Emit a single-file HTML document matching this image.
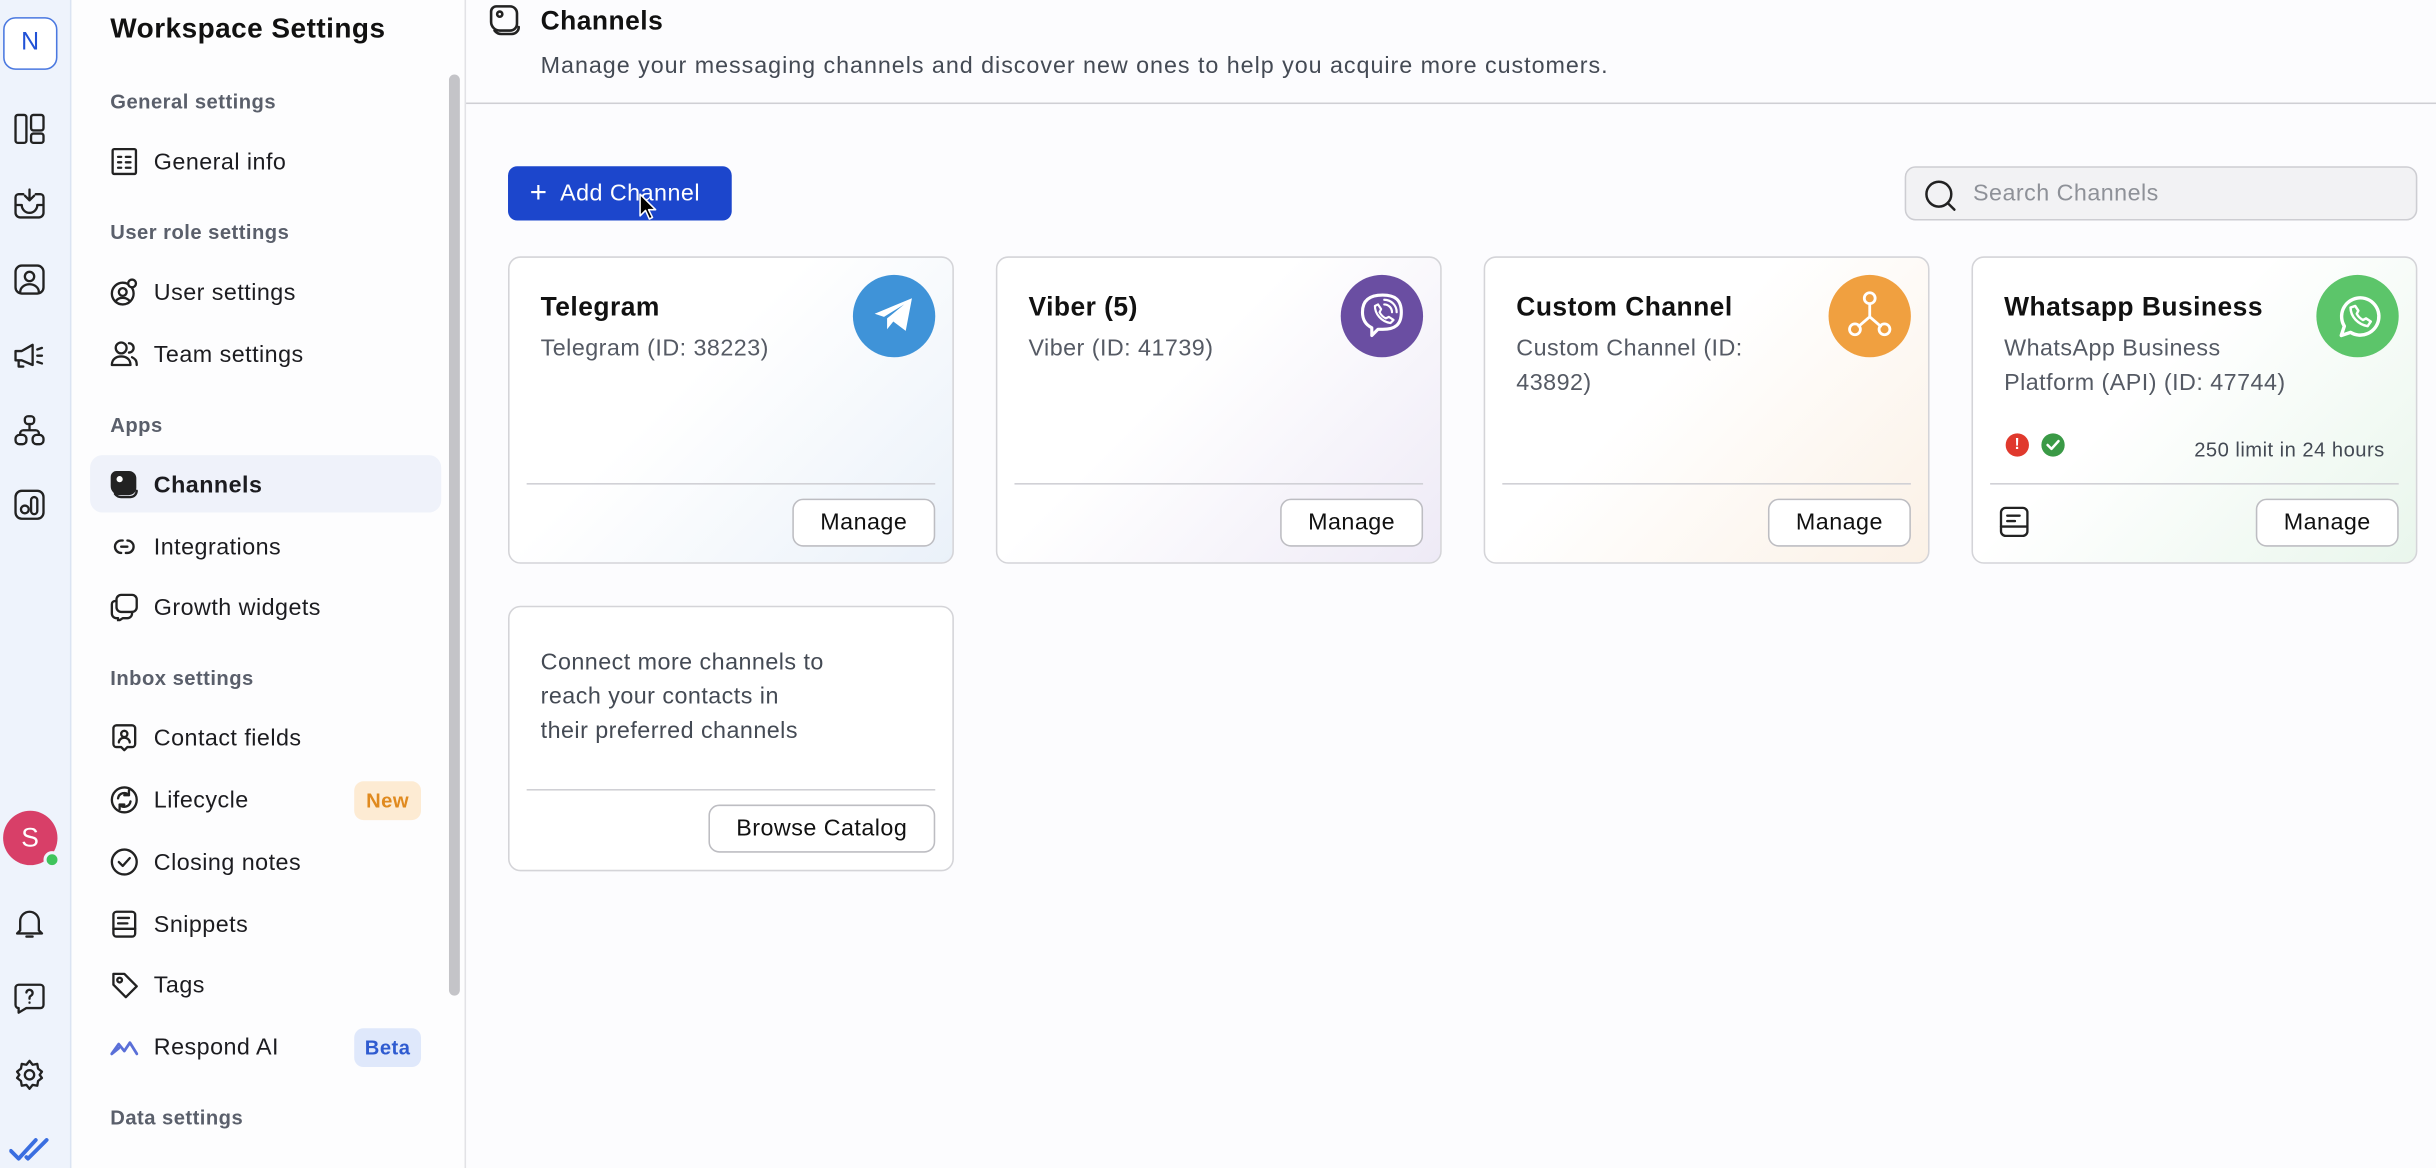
<!DOCTYPE html>
<html><head><meta charset="utf-8"><style>
*{box-sizing:border-box;margin:0;padding:0}
html,body{width:2436px;height:1168px;overflow:hidden;background:#fff;font-family:"Liberation Sans",sans-serif}
#w{position:absolute;left:0;top:0;width:1568px;height:752px;transform:scale(1.55357,1.5532);transform-origin:0 0;background:#fcfcfe;letter-spacing:0.3px}
.a{position:absolute}
.rail{left:0;top:0;width:46px;height:752px;background:#eef3fc;border-right:1px solid #dbe4f3}
.side{left:46px;top:0;width:254px;height:752px;background:#fdfdfe;border-right:1px solid #e2e2e6}
.sec{position:absolute;left:71px;font-size:13px;font-weight:bold;color:#5a5f6b}
.it{position:absolute;left:99px;font-size:15px;color:#1c1c20;margin-top:1px}
.ic{position:absolute;left:71px;width:18px;height:18px}
svg{fill:none;stroke:#222;stroke-width:1.5;stroke-linecap:round;stroke-linejoin:round}
.card{position:absolute;width:287px;height:198px;border:1px solid #d4d4d8;border-radius:8px;background:#fff;overflow:hidden}
.card h3{position:absolute;left:20px;top:22px;font-size:17px;color:#111}
.card p{position:absolute;left:20px;top:48px;font-size:15px;line-height:22px;color:#555a64;width:180px}
.card .hr{position:absolute;left:11px;right:11px;top:145px;border-top:1px solid #cfcfd4}
.btn{position:absolute;right:11px;top:155px;height:31px;border:1px solid #bdbdc2;border-radius:7px;background:#fff;font-size:15px;color:#111;padding:0 17px;line-height:29px}
.logo{position:absolute;right:11px;top:11px;width:53px;height:53px;border-radius:50%}
</style></head><body><div id="w">
<div class="a rail"></div>
<div class="a" style="left:2px;top:11px;width:35px;height:34px;border:1.5px solid #4a78e0;border-radius:8px;background:#fff;color:#2152d6;font-size:16px;text-align:center;line-height:31px">N</div>
<svg class="a" style="left:9px;top:73px" width="20" height="20" viewBox="0 0 20 20"><rect x="1" y="1" width="7" height="18" rx="1.5"/><rect x="11" y="1" width="8" height="10" rx="1.5"/><rect x="11" y="13" width="8" height="6" rx="1.5"/></svg>
<svg class="a" style="left:9px;top:121px" width="20" height="20" viewBox="0 0 20 20"><path d="M6 4H3a2 2 0 0 0-2 2v10a3 3 0 0 0 3 3h12a3 3 0 0 0 3-3V6a2 2 0 0 0-2-2h-3M1 11h4a5 5 0 0 0 10 0h4M10 1v7M7 5l3 3 3-3"/></svg>
<svg class="a" style="left:9px;top:170px" width="20" height="20" viewBox="0 0 20 20"><rect x="1" y="1" width="18" height="18" rx="4"/><circle cx="10" cy="8" r="3"/><path d="M4 18a6 5 0 0 1 12 0"/></svg>
<svg class="a" style="left:9px;top:219px" width="20" height="20" viewBox="0 0 20 20"><path d="M1 7h4l7-4v13l-7-3H1zM3 13v4h3M15 6l3-1M15 10h3M15 14l3 1"/></svg>
<svg class="a" style="left:9px;top:267px" width="20" height="20" viewBox="0 0 20 20"><rect x="7" y="1" width="6" height="5" rx="2"/><rect x="1" y="13" width="7" height="6" rx="2.5"/><rect x="12" y="13" width="7" height="6" rx="2.5"/><path d="M10 6v4M4 13v-1a2 2 0 0 1 2-2h8a2 2 0 0 1 2 2v1"/></svg>
<svg class="a" style="left:9px;top:315px" width="20" height="20" viewBox="0 0 20 20"><rect x="1" y="1" width="18" height="18" rx="4"/><circle cx="7" cy="13" r="2.5"/><rect x="11" y="5" width="4" height="11" rx="2"/></svg>
<div class="a" style="left:2px;top:522px;width:35px;height:35px;border-radius:50%;background:#d83f68;color:#fff;font-size:17px;text-align:center;line-height:35px">S</div>
<div class="a" style="left:28px;top:548px;width:11px;height:11px;border-radius:50%;background:#3ec45c;border:2px solid #eef3fc"></div>
<svg class="a" style="left:10px;top:585px" width="18" height="20" viewBox="0 0 18 20"><path d="M3 14V8a6 6 0 0 1 12 0v6l2 2H1zM7 18h4"/></svg>
<svg class="a" style="left:9px;top:633px" width="20" height="20" viewBox="0 0 20 20"><path d="M3 1h14a2 2 0 0 1 2 2v11a2 2 0 0 1-2 2H8l-5 3v-3a2 2 0 0 1-2-2V3a2 2 0 0 1 2-2zM8 6a2 2 0 1 1 3 2c-1 .6-1 1-1 2M10 12.5v.1"/></svg>
<svg class="a" style="left:9px;top:682px" width="20" height="20" viewBox="0 0 20 20"><circle cx="10" cy="10" r="3"/><path d="M10 1l2 2.5 3-.5.5 3 2.5 2-1.5 2 1.5 2-2.5 2-.5 3-3-.5-2 2.5-2-2.5-3 .5-.5-3L2 12l1.5-2L2 8l2.5-2L5 3l3 .5z"/></svg>
<svg class="a" style="left:6px;top:732px" width="28" height="16" viewBox="0 0 28 16"><path style="stroke:#3a6ee0;stroke-width:2.5" d="M1 9l5 5L17 2M11 13l1 1L24 2"/></svg>

<div class="a side"></div>
<div class="a" style="left:71px;top:8px;font-size:18px;font-weight:bold;color:#111">Workspace Settings</div>
<div class="a" style="left:289px;top:48px;width:7px;height:593px;border-radius:4px;background:#c4c4c8"></div>
<div class="sec" style="top:58px">General settings</div>
<div class="sec" style="top:142px">User role settings</div>
<div class="sec" style="top:266px">Apps</div>
<div class="sec" style="top:429px">Inbox settings</div>
<div class="sec" style="top:712px">Data settings</div>
<div class="a" style="left:58px;top:293px;width:226px;height:37px;border-radius:8px;background:#eff2fa"></div>
<svg class="ic" style="top:95px" viewBox="0 0 18 18"><rect x="1.5" y="1" width="15" height="16" rx="1"/><path d="M5 6h2M10 6h3M5 9.5h2M10 9.5h3M5 13h2M10 13h3"/></svg>
<div class="it" style="top:95px">General info</div>
<svg class="ic" style="top:179px" viewBox="0 0 18 18"><circle cx="8" cy="10" r="7"/><circle cx="8" cy="9" r="2.5"/><path d="M3.5 15a5 4 0 0 1 9 0"/><circle cx="14" cy="3.5" r="2.5" style="fill:#fff"/></svg>
<div class="it" style="top:179px">User settings</div>
<svg class="ic" style="top:219px" viewBox="0 0 18 18"><path d="M7 1.5a3.5 3.5 0 1 1 0 7a3.5 3.5 0 1 1 0-7zM1 16c0-4 3-5.5 6-5.5s6 1.5 6 5.5zM12 2a3 3 0 0 1 0 6M14 11c2 1 3 2 3 5"/></svg>
<div class="it" style="top:219px">Team settings</div>
<svg class="ic" style="top:303px" viewBox="0 0 18 18"><path style="fill:#222" d="M4 1h8a4 4 0 0 1 4 4v6a4 4 0 0 1-4 4H6a5 5 0 0 1-5-5V4a3 3 0 0 1 3-3z"/><circle cx="6" cy="5.5" r="2" style="fill:#fff;stroke:none"/><path d="M3 15a5 5 0 0 0 4 2h6a4 4 0 0 0 4-4"/></svg>
<div class="it" style="top:303px;font-weight:bold">Channels</div>
<svg class="ic" style="top:343px" viewBox="0 0 18 18"><path d="M7 13a4 4 0 1 1 0-8h1M11 5a4 4 0 1 1 0 8h-1M7 9l4 0"/></svg>
<div class="it" style="top:343px">Integrations</div>
<svg class="ic" style="top:382px" viewBox="0 0 18 18"><rect x="4" y="1" width="13" height="11" rx="3"/><path d="M4 5H3a2 2 0 0 0-2 2v6a3 3 0 0 0 3 3h1v2l3-2h3a3 3 0 0 0 3-3v-1"/></svg>
<div class="it" style="top:382px">Growth widgets</div>
<svg class="ic" style="top:466px" viewBox="0 0 18 18"><path d="M4 1h10a2 2 0 0 1 2 2v10a2 2 0 0 1-2 2h-3l-2 2-2-2H4a2 2 0 0 1-2-2V3a2 2 0 0 1 2-2z"/><circle cx="9" cy="6.5" r="2"/><path d="M5.5 12a3.5 3 0 0 1 7 0"/></svg>
<div class="it" style="top:466px">Contact fields</div>
<svg class="ic" style="top:506px" viewBox="0 0 18 18"><circle cx="9" cy="9" r="8"/><path d="M5 8a4 4 0 0 1 7-2M13 10a4 4 0 0 1-7 2M12 3v3h-3M6 15v-3h3"/></svg>
<div class="it" style="top:506px">Lifecycle</div>
<div class="a" style="left:228px;top:503px;width:43px;height:25px;border-radius:6px;background:#fdebd3;color:#e08a1f;font-size:13px;font-weight:bold;text-align:center;line-height:25px">New</div>
<svg class="ic" style="top:546px" viewBox="0 0 18 18"><circle cx="9" cy="9" r="8"/><path d="M5.5 9l2.5 2.5 4.5-5"/></svg>
<div class="it" style="top:546px">Closing notes</div>
<svg class="ic" style="top:586px" viewBox="0 0 18 18"><rect x="2" y="1" width="14" height="16" rx="2"/><path d="M5 5h7M5 8.5h6M2 12h14"/></svg>
<div class="it" style="top:586px">Snippets</div>
<svg class="ic" style="top:625px" viewBox="0 0 18 18"><path d="M2 2h7l8 8-7 7-8-8z"/><circle cx="6" cy="6" r="1.5"/></svg>
<div class="it" style="top:625px">Tags</div>
<svg class="ic" style="top:665px" viewBox="0 0 20 18"><path style="stroke:#5a6fd8;stroke-width:2" d="M1 14l5-7 4 5 4-6 5 8M1 14l5-4"/></svg>
<div class="it" style="top:665px">Respond AI</div>
<div class="a" style="left:228px;top:662px;width:43px;height:25px;border-radius:6px;background:#dfe8fb;color:#2f5bd0;font-size:13px;font-weight:bold;text-align:center;line-height:25px">Beta</div>

<div class="a" style="left:300px;top:66px;width:1268px;border-top:1px solid #cfcfd4"></div>
<svg class="a" style="left:315px;top:3px" width="20" height="20" viewBox="0 0 18 18"><path d="M4 1h8a4 4 0 0 1 4 4v6a4 4 0 0 1-4 4H6a5 5 0 0 1-5-5V4a3 3 0 0 1 3-3z"/><circle cx="6" cy="5.5" r="1.5"/><path d="M3 15a5 5 0 0 0 4 2h6a4 4 0 0 0 4-4"/></svg>
<div class="a" style="left:348px;top:4px;font-size:17px;font-weight:bold;color:#111">Channels</div>
<div class="a" style="left:348px;top:34px;font-size:15px;color:#444a54;letter-spacing:0.62px">Manage your messaging channels and discover new ones to help you acquire more customers.</div>

<div class="a" style="left:327px;top:107px;width:144px;height:35px;border-radius:6px;background:#1c46cc;color:#fff;font-size:15px;line-height:35px;padding-left:14px"><span style="font-size:19px;vertical-align:-1px">+</span>&nbsp; Add Channel</div>
<svg class="a" style="left:411px;top:124px;stroke:#fff;stroke-width:1" width="12" height="18" viewBox="0 0 12 18"><path style="fill:#000" d="M1 1v14l3.5-3.5 2.5 5.5 2-1-2.5-5H11z"/></svg>
<div class="a" style="left:1226px;top:107px;width:330px;height:35px;border-radius:7px;background:#f2f2f4;border:1px solid #cdcdd2"></div>
<svg class="a" style="left:1238px;top:115px;stroke-width:1.6" width="22" height="22" viewBox="0 0 22 22"><circle cx="10" cy="10" r="8"/><path d="M16 16l4 4"/></svg>
<div class="a" style="left:1270px;top:116px;font-size:15px;color:#8e9198">Search Channels</div>

<div class="card" style="left:327px;top:165px;background:linear-gradient(135deg,#fff 40%,#eaf1f9)"><h3>Telegram</h3><p>Telegram (ID: 38223)</p>
<div class="logo" style="background:#3f93d8"><svg style="position:absolute;left:13px;top:14px;fill:#fff;stroke:none" width="27" height="24" viewBox="0 0 27 24"><path d="M1 11L25 1 21 22 13 16 9 21 9 14 20 5 7 13z"/></svg></div>
<div class="hr"></div><div class="btn">Manage</div></div>
<div class="card" style="left:641px;top:165px;background:linear-gradient(135deg,#fff 40%,#eeeaf6)"><h3>Viber (5)</h3><p>Viber (ID: 41739)</p>
<div class="logo" style="background:#6a4ea2"><svg style="position:absolute;left:12px;top:11px;stroke:#fff;stroke-width:2" width="30" height="30" viewBox="0 0 30 30"><path d="M15 2c8 0 12 3 12 11s-4 11-12 11h-3l-4 4v-5c-4-2-6-5-6-10C2 5 7 2 15 2z"/><path d="M10 9c0 5 4 10 10 11l2-2-3-2-2 1c-2-1-3-2-4-4l1-2-2-3z" style="stroke-width:1.4"/><path d="M16 8a5 5 0 0 1 5 5M16 5a8 8 0 0 1 8 8" style="stroke-width:1.4"/></svg></div>
<div class="hr"></div><div class="btn">Manage</div></div>
<div class="card" style="left:955px;top:165px;background:linear-gradient(135deg,#fff 40%,#fbf1e6)"><h3>Custom Channel</h3><p>Custom Channel (ID: 43892)</p>
<div class="logo" style="background:#f0a040"><svg style="position:absolute;left:12px;top:10px;stroke:#fff;stroke-width:1.8" width="29" height="32" viewBox="0 0 29 32"><circle cx="14.5" cy="5" r="3.5"/><circle cx="5" cy="25" r="3.5"/><circle cx="24" cy="25" r="3.5"/><path d="M14.5 9v8M14.5 17l-7 6M14.5 17l7 6"/></svg></div>
<div class="hr"></div><div class="btn">Manage</div></div>
<div class="card" style="left:1269px;top:165px;background:linear-gradient(135deg,#fff 40%,#e9f6ec)"><h3>Whatsapp Business</h3><p style="width:195px">WhatsApp Business Platform (API) (ID: 47744)</p>
<div class="logo" style="background:#5cc56a"><svg style="position:absolute;left:12px;top:12px;stroke:#fff;stroke-width:2.2" width="30" height="30" viewBox="0 0 30 30"><path d="M4 27l2-6A12 12 0 1 1 10 25z"/><path d="M10 9c0 6 5 11 11 12l2-3-3-2-2 1c-2-1-3-2-4-4l1-2-2-3z" style="stroke-width:1.6"/></svg></div>
<div class="a" style="left:21px;top:113px;width:15px;height:15px;border-radius:50%;background:#e0392d;color:#fff;font-size:10px;font-weight:bold;text-align:center;line-height:15px">!</div>
<div class="a" style="left:44px;top:113px;width:15px;height:15px;border-radius:50%;background:#3a9a46"><svg style="position:absolute;left:3px;top:4px;stroke:#fff;stroke-width:1.6" width="9" height="7" viewBox="0 0 9 7"><path d="M1 3.5l2.5 2.5L8 1"/></svg></div>
<div class="a" style="right:20px;top:116px;font-size:13px;color:#444a54">250 limit in 24 hours</div>
<svg class="a" style="left:17px;top:160px" width="19" height="20" viewBox="0 0 19 20"><rect x="1" y="1" width="17" height="18" rx="3"/><path d="M5 6h8M5 9.5h5M1 13h17"/></svg>
<div class="hr"></div><div class="btn">Manage</div></div>

<div class="card" style="left:327px;top:390px;height:171px"><p style="top:25px;width:240px;color:#444a54">Connect more channels to<br>reach your contacts in<br>their preferred channels</p>
<div class="hr" style="top:117px"></div><div class="btn" style="top:127px">Browse Catalog</div></div>
</div></body></html>
